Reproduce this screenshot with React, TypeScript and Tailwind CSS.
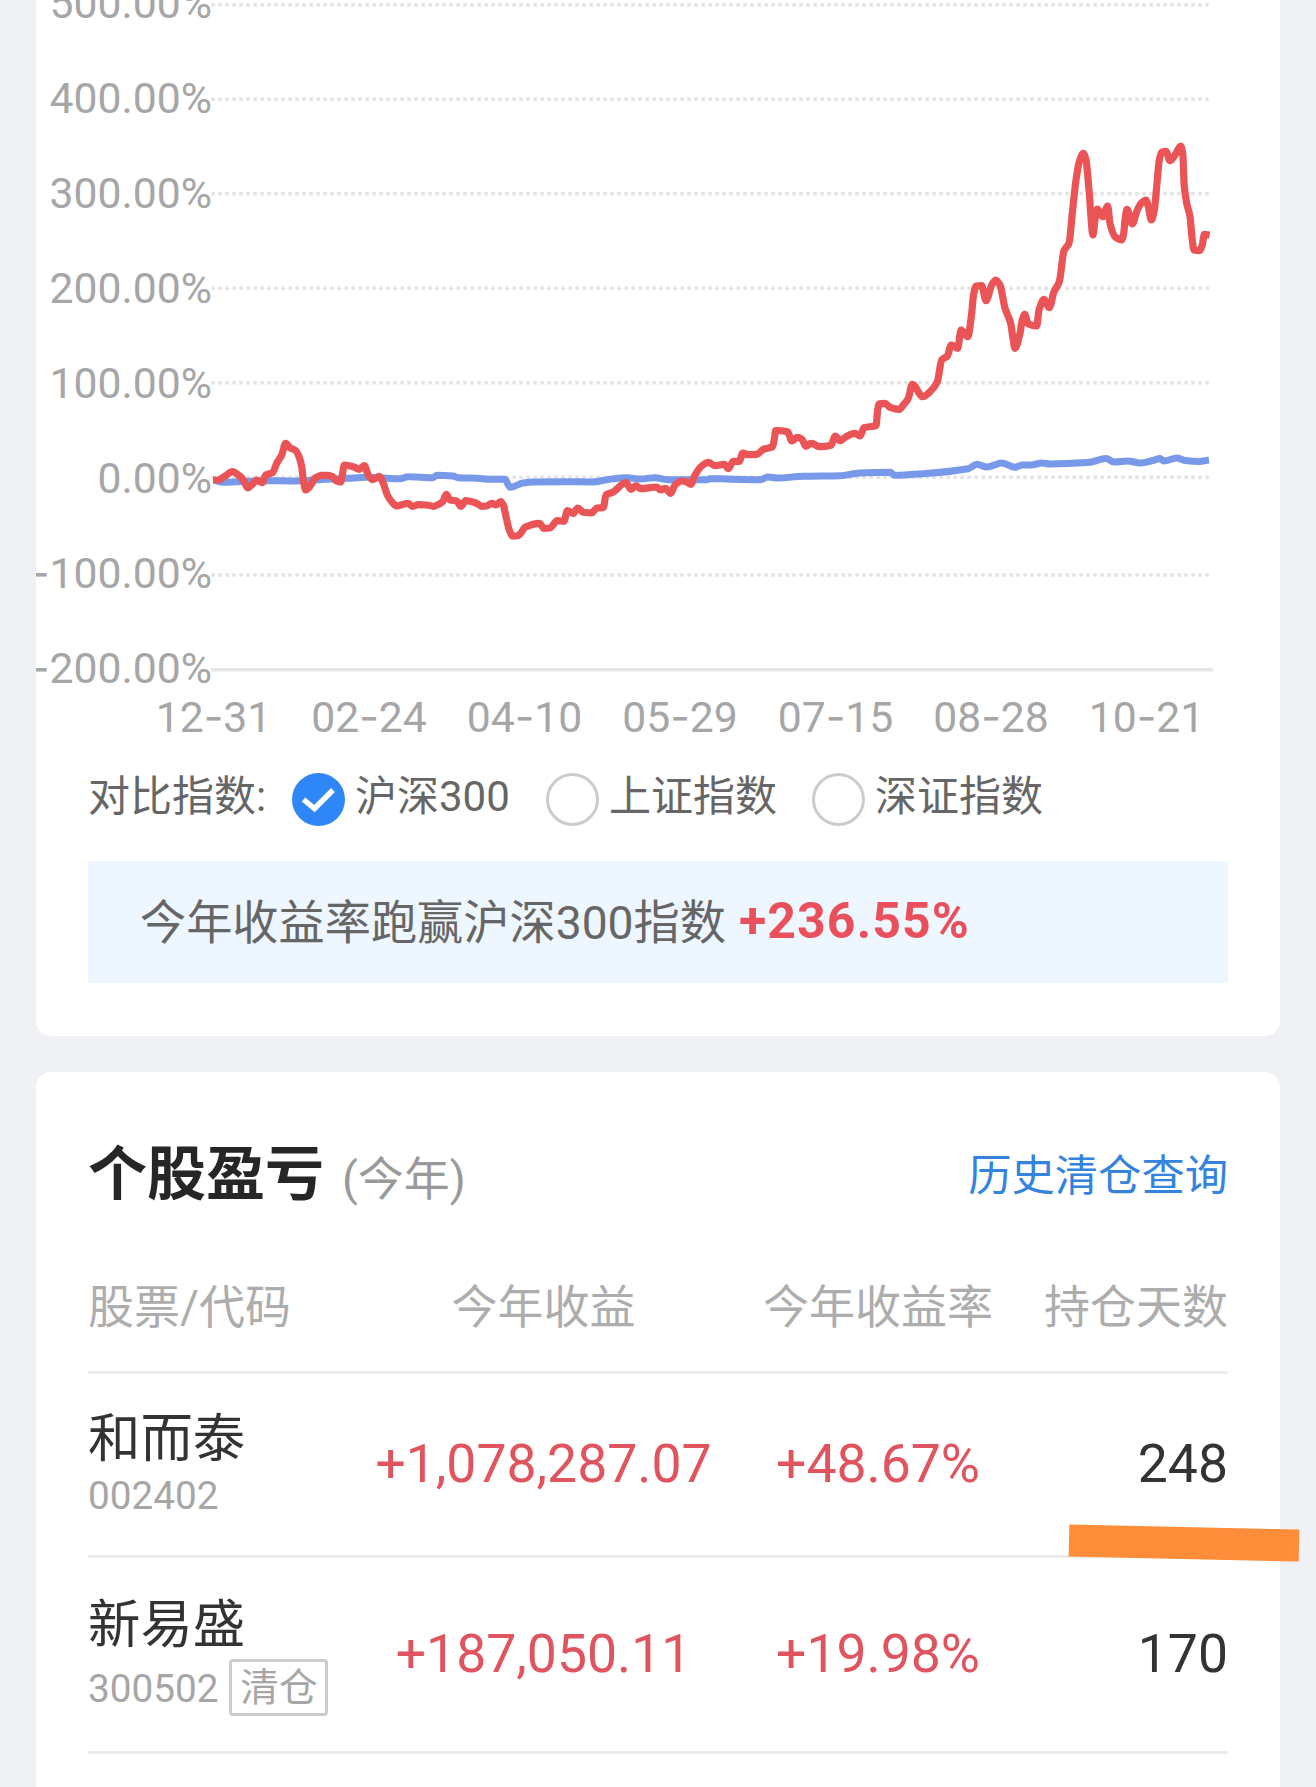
import clsx from 'clsx'

const Y_TICKS = [
  { label: '500.00%', base: 17.8, line: 4.7 },
  { label: '400.00%', base: 113, line: 99.3 },
  { label: '300.00%', base: 208, line: 193.8 },
  { label: '200.00%', base: 303, line: 288.3 },
  { label: '100.00%', base: 398, line: 382.7 },
  { label: '0.00%', base: 493, line: 477.2 },
  { label: '-100.00%', base: 588, line: 575 },
  { label: '-200.00%', base: 683, line: null },
]

const X_TICKS = ['12-31', '02-24', '04-10', '05-29', '07-15', '08-28', '10-21']

const ACCOUNT_LINE =
  '213,480 218.3,480 225,476 232.7,471.7 238.3,475 243.3,480 247.7,488 251.7,485 256.7,480 262.3,482.7 265.7,475 272.7,472.7 276.7,463.3 281.7,455 285.7,443.3 290,447.7 295.7,450.7 299,456.7 301.7,466.7 303.3,480 305.7,490 309.3,487.3 315,478.3 321.7,475.3 328.3,475.3 332.7,476.7 336,480.7 340.7,482 342.3,475 344.3,465 353.3,466.7 359.3,469.3 364.3,465.7 368.3,475 372.7,479.7 379.3,476.3 383.3,483.3 387.3,495 391.7,501.7 396.7,506 407.7,503.3 412.7,506.3 418.3,504.7 426.7,505 433.3,506.3 439.3,504 442.7,501.7 446.3,494.3 450,500 456.7,501 461,506.3 465.7,500.7 476.7,503.3 481.7,506.3 486.7,506 491.7,503.3 496,505 500.7,501.7 503.3,505 506,516.7 509.3,530 512.7,536 517.3,536 520.7,533.3 525,527.3 539.3,523.3 544,528.3 550,528 557.3,520.7 564,521.3 567.3,510.7 573.3,513.3 577.7,508 583.3,512.3 591.7,513 596.7,508 603.3,507.7 606,495 612.7,492.3 626,482.7 631,489.3 636,485.7 640.7,488.7 656.7,487 660.7,490 665.3,488.3 670.7,493.3 675,485 681.7,481 686,481.7 690.7,484.3 695,475 701.7,466 708.3,462.3 715,465.7 724.3,464.3 728.3,468.7 733.3,461.3 739.3,461.3 742.7,453 748.3,454.7 756.7,454.3 763.3,449.3 772.7,446.7 774.7,436.7 775.7,430.5 787.7,431.7 791.7,441 797.3,437.3 801.7,439 806,446.3 811,443.3 820,446.7 831,445.3 835.3,436 840,440.7 846,436.7 855,433.3 860,436 864,427.7 876,425.7 877.7,410 879.3,403.7 885,403.3 890,407.3 899.3,409.3 903.3,405 908.3,398.3 912.3,384.3 922.7,396.7 930.7,391 937.3,381.7 941.7,360 947.3,356 951.3,345 957.7,348.3 961,330 967.7,336.7 971.7,313.3 973.3,296.7 976,286 981.7,285.7 986,300.7 991.7,285 995.7,280 1000,285 1005,308.3 1010.7,323.3 1012.7,336.7 1015,348.3 1020,333.3 1022.3,320 1024.7,314.3 1028.3,324 1036.7,326 1039,310 1044,299.3 1049.3,307.7 1054,291.7 1059.3,281.7 1064,250.7 1069,243.3 1072.3,213.3 1076,180 1079.3,161.7 1083.3,153.3 1086,160 1089,190 1093,235 1095,220 1097.3,209 1102.7,216.7 1107.7,206 1110,223.3 1115,236.7 1121.7,240 1123.7,233.3 1125,220 1127,209.3 1132.3,224 1137.3,210 1141.7,202.7 1146,200 1148.3,206.7 1151.3,220 1154.3,210 1156.7,186.7 1159.3,160 1161.7,152.3 1166,151.3 1170,160.7 1175,155 1180.7,146 1182.7,153.3 1184.3,186.7 1186.7,203.3 1190,216.7 1192.3,240 1194,250 1199.3,250.7 1202.3,245 1204.3,234.3 1209.7,235'

const INDEX_LINE =
  '214,480 223,482.3 266.7,480.7 293.3,481 326.7,479.3 346.7,478.3 366.7,477.3 386.7,478.3 400,478.7 408,476.7 433,477.7 437,475.3 453,476 458,477.7 477,478.3 490,479.3 505,479.3 510,487.3 523,483 533,482 563,481.7 593,482 607,479.7 627,477.7 640,479 655,477.7 667,479.7 707,479.7 710,478.7 720,478.7 733,479.3 760,479.7 768,476.9 777,478 803,476.3 840,475.7 860,473 890,472.3 895,475.3 923,473.7 968,468.7 977,464.3 987,467 1002,463 1015,467.3 1022,465 1031,465 1042,463 1050,464 1088,462.6 1106,458.5 1114,462 1128,461 1140,463 1153,460.5 1160,458.6 1164,461 1177,458 1185,460.5 1199,461.5 1209,460'

const INDEXES = [
  { name: '沪深300', checked: true, width: 'w-[254px]' },
  { name: '上证指数', checked: false, width: 'w-[266px]' },
  { name: '深证指数', checked: false, width: 'w-[266px]' },
]

const STOCKS = [
  { name: '和而泰', code: '002402', closed: false, profit: '+1,078,287.07', rate: '+48.67%', days: 248 },
  { name: '新易盛', code: '300502', closed: true, profit: '+187,050.11', rate: '+19.98%', days: 170 },
]

const COLS = 'grid grid-cols-[270px_371px_298px_201px] items-center border-b-[3px] border-[#ececec]'

// monotone cubic through the points, so peaks stay where they are but get rounded
const smooth = (points: string) => {
  const p = points.split(' ').map(s => s.split(',').map(Number))
  const slope = (i: number) => (p[i + 1][1] - p[i][1]) / (p[i + 1][0] - p[i][0])
  const m = p.map((_, i) => {
    if (i === 0) return slope(0)
    if (i === p.length - 1) return slope(i - 1)
    const a = slope(i - 1)
    const b = slope(i)
    return a * b <= 0 ? 0 : (2 * a * b) / (a + b)
  })
  let d = `M${p[0][0]},${p[0][1]}`
  for (let i = 1; i < p.length; i++) {
    const [x0, y0] = p[i - 1]
    const [x1, y1] = p[i]
    const h = (x1 - x0) / 3
    d += `C${x0 + h},${y0 + m[i - 1] * h} ${x1 - h},${y1 - m[i] * h} ${x1},${y1}`
  }
  return d
}

// the minus/dash glyph comes from Inter, which draws it wider than Roboto
const AxisText = ({ text }: { text: string }) => {
  const [head, tail] = text.split('-')
  if (tail === undefined) return <>{text}</>
  return <>{head}<tspan className="font-['Inter']">-</tspan>{tail}</>
}

const ProfitChart = () => (
  <svg viewBox="36 0 1244 745" className="block w-[1244px] h-[745px] text-[42.7px]" fill="#a6a6a6">
    {Y_TICKS.map(t => (
      <g key={t.label}>
        <text x="212" y={t.base} textAnchor="end"><AxisText text={t.label} /></text>
        {t.line !== null && (
          <line x1="211.3" x2="1209" y1={t.line} y2={t.line} stroke="#e4e4e4" strokeWidth="3.6" strokeDasharray="3.6 3.4" />
        )}
      </g>
    ))}
    <line x1="211" x2="1213" y1="669.7" y2="669.7" stroke="#e6e6e6" strokeWidth="3.6" />
    {X_TICKS.map((d, i) => (
      <text key={d} x={213.5 + i * 155.5} y="732" textAnchor="middle"><AxisText text={d} /></text>
    ))}
    <path d={smooth(INDEX_LINE)} fill="none" stroke="#7898ea" strokeWidth="7" strokeLinejoin="round" />
    <path d={smooth(ACCOUNT_LINE)} fill="none" stroke="#ea5456" strokeWidth="7.2" strokeLinejoin="round" />
  </svg>
)

const Radio = ({ checked }: { checked: boolean }) => (
  <span
    className={clsx(
      'flex items-center justify-center w-[53px] h-[53px] rounded-full shrink-0 mt-[9px]',
      checked ? 'bg-[#2f86f6]' : 'border-[3px] border-[#cccccc]'
    )}
  >
    {checked && (
      <svg width="53" height="53" viewBox="0 0 53 53" fill="none" stroke="#fff" strokeWidth="5.4">
        <path d="M11.5 26.5 L22.5 35.5 L41 17" />
      </svg>
    )}
  </span>
)

export default function App() {
  return (
    <div className="relative flex flex-col gap-9 w-[1316px] h-[1787px] overflow-hidden px-9 bg-[#f0f1f4] font-['Roboto','Noto_Sans_CJK_SC',sans-serif]">
      {/* ── Yield chart ── */}
      <section className="h-[1036px] shrink-0 rounded-b-[15px] bg-white overflow-hidden">
        <ProfitChart />

        <div className="flex items-center h-[100px] pl-[52px] text-[42px] leading-none text-[#666666]">
          <span className="w-[204px] pt-1">对比指数:</span>
          {INDEXES.map(({ name, checked, width }) => (
            <label key={name} className={clsx('flex items-center gap-2.5', width)}>
              <Radio checked={checked} />
              <span className="pt-1 whitespace-nowrap">{name}</span>
            </label>
          ))}
        </div>

        <div className="flex items-center mx-[52px] mt-4 h-[122px] pl-[52px] bg-[#eef6ff] text-[46.2px] leading-none text-[#666666]">
          <span className="pt-0.5">今年收益率跑赢沪深300指数</span>
          <span className="ml-[13px] pb-0.5 text-[50px] font-bold tracking-[1.1px] text-[#ea505b]">+236.55%</span>
        </div>
      </section>

      {/* ── Per-stock profit ── */}
      <section className="h-[760px] shrink-0 rounded-t-[15px] bg-white px-[52px]">
        <div className="flex items-baseline h-[167px] pt-[71px] leading-[64px]">
          <h2 className="text-[59px] font-bold text-[#262626]">个股盈亏</h2>
          <span className="ml-[18px] text-[46px] text-[#999999]">(今年)</span>
          <a className="ml-auto self-start text-[43.3px] leading-[68px] text-[#3483dc]">历史清仓查询</a>
        </div>

        <div className={clsx(COLS, 'h-[135px] pt-[3px] text-[46px] leading-none text-[#adadad]')}>
          <span>股票/代码</span>
          <span className="text-center">今年收益</span>
          <span className="text-center">今年收益率</span>
          <span className="text-right">持仓天数</span>
        </div>

        {STOCKS.map(s => (
          <div key={s.code} className={clsx(COLS, 'text-[53.5px] leading-none', s.closed ? 'h-[196px]' : 'h-[184px]')}>
            <div className={clsx('flex flex-col', s.closed ? 'pt-1.5 gap-2' : 'gap-[11px]')}>
              <div className="text-[52.4px] text-[#333333]">{s.name}</div>
              <div className="flex items-center gap-[11px] text-[38.7px] text-[#a6a6a6]">
                <span className={clsx(s.closed && 'pt-1')}>{s.code}</span>
                {s.closed && (
                  <span className="flex items-center justify-center w-[99px] h-[57px] pt-0.5 border-[3px] border-[#cccccc] rounded-[4px]">清仓</span>
                )}
              </div>
            </div>
            <span className="pb-0.5 text-center text-[#e0545f]">{s.profit}</span>
            <span className="pb-0.5 text-center text-[#e0545f]">{s.rate}</span>
            <span className="pb-0.5 text-right text-[#333333]">{s.days}</span>
          </div>
        ))}
      </section>

      {/* marker stroke over the first row */}
      <div className="absolute left-[1069px] top-[1527px] w-[230px] h-8 rotate-[1.3deg] bg-[#ff8c39]" />
    </div>
  )
}
